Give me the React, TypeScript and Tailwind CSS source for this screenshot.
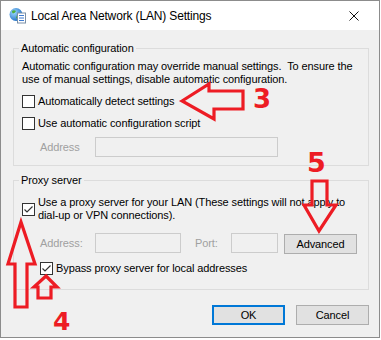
import React from "react";

const F = { fontFamily: '"Liberation Sans", Arial, sans-serif' };

function Check({ checked }: { checked?: boolean }) {
  return (
    <div className="w-[13px] h-[13px] border border-[#333333] bg-white shrink-0 flex items-center justify-center">
      {checked && (
        <svg width="11" height="11" viewBox="0 0 11 11">
          <path d="M1.5 5.5 L4 8 L9.5 2.5" fill="none" stroke="#333" strokeWidth="1.2" />
        </svg>
      )}
    </div>
  );
}

function GlobeIcon() {
  return (
    <svg width="17" height="17" viewBox="0 0 17 17">
      <defs>
        <radialGradient id="g" cx="0.35" cy="0.35" r="0.7">
          <stop offset="0" stopColor="#9fd8ff" />
          <stop offset="1" stopColor="#1f6fc4" />
        </radialGradient>
      </defs>
      <circle cx="7" cy="7.5" r="6.5" fill="url(#g)" />
      <path d="M3 4 Q5 2.5 7 4 Q6 6 4 6.5 Q3 6 3 4 Z" fill="#4caf3c" />
      <path d="M8 8 Q10 7 11 9 Q9 12 7 11 Z" fill="#4caf3c" />
      <rect x="8.5" y="6" width="8" height="10" fill="#ffffff" stroke="#7a8fa6" strokeWidth="1" />
      <line x1="10" y1="8.5" x2="15" y2="8.5" stroke="#3d7bd1" strokeWidth="1" />
      <line x1="10" y1="11" x2="15" y2="11" stroke="#3d7bd1" strokeWidth="1" />
      <line x1="10" y1="13.5" x2="15" y2="13.5" stroke="#3d7bd1" strokeWidth="1" />
    </svg>
  );
}

export default function App() {
  return (
    <div className="relative w-[381px] h-[340px] bg-white text-black" style={F}>
      <div className="w-[380px] h-[338px] border border-[#8c8c8c] flex flex-col bg-[#f0f0f0]">
        <div className="h-[29px] bg-white flex items-center shrink-0">
          <div className="ml-[8px]">
            <GlobeIcon />
          </div>
          <div className="ml-[5px] text-[12px] leading-[16px] tracking-[-0.15px] pt-[1px]">
            Local Area Network (LAN) Settings
          </div>
          <div className="ml-auto mr-[20px]">
            <svg width="10" height="10" viewBox="0 0 10 10">
              <path d="M0.5 0.5 L9.5 9.5 M9.5 0.5 L0.5 9.5" stroke="#111" strokeWidth="1" />
            </svg>
          </div>
        </div>
        <div className="flex-1 pl-[12px] pr-[10px] text-[11px] tracking-[-0.1px]">
          <fieldset className="mt-[10px] border border-[#dcdcdc] pl-[8px] pr-[8px] pb-[8px]">
            <legend className="ml-[-3px] px-[2px] leading-[16px]">Automatic configuration</legend>
            <div className="mt-[4px] leading-[13px] whitespace-nowrap">
              <div>Automatic configuration may override manual settings.&nbsp; To ensure the</div>
              <div>use of manual settings, disable automatic configuration.</div>
            </div>
            <div className="mt-[9px] flex items-center h-[13px]">
              <Check />
              <span className="ml-[3px] whitespace-nowrap">Automatically detect settings</span>
            </div>
            <div className="mt-[9px] flex items-center h-[13px]">
              <Check />
              <span className="ml-[3px] whitespace-nowrap">Use automatic configuration script</span>
            </div>
            <div className="mt-[7px] flex items-center pl-[18px]">
              <span className="w-[55px] text-[#a0a0a0]">Address</span>
              <div className="w-[183px] h-[20px] border border-[#cccccc] bg-[#f0f0f0]" />
            </div>
          </fieldset>
          <fieldset className="mt-[6px] border border-[#dcdcdc] pl-[8px] pr-[8px] pb-[14px]">
            <legend className="ml-[-3px] px-[2px] leading-[16px]">Proxy server</legend>
            <div className="mt-[8px] flex items-center">
              <Check checked />
              <div className="ml-[3px] leading-[13px] whitespace-nowrap">
                <div>Use a proxy server for your LAN (These settings will not apply to</div>
                <div>dial-up or VPN connections).</div>
              </div>
            </div>
            <div className="mt-[10px] flex items-center pl-[18px]">
              <span className="w-[55px] text-[#a0a0a0]">Address:</span>
              <div className="w-[86px] h-[20px] border border-[#cccccc] bg-[#f0f0f0]" />
              <span className="ml-[14px] w-[36px] text-[#a0a0a0]">Port:</span>
              <div className="w-[47px] h-[20px] border border-[#cccccc] bg-[#f0f0f0]" />
              <div className="ml-[6px] mt-[2px] w-[73px] h-[20px] border border-[#adadad] bg-[#e1e1e1] flex items-center justify-center">
                Advanced
              </div>
            </div>
            <div className="mt-[8px] flex items-center h-[13px] pl-[18px]">
              <Check checked />
              <span className="ml-[3px] whitespace-nowrap">Bypass proxy server for local addresses</span>
            </div>
          </fieldset>
          <div className="mt-[15px] flex justify-end gap-[11px]">
            <div className="w-[73px] h-[20px] border-2 border-[#0078d7] bg-[#e1e1e1] flex items-center justify-center">
              OK
            </div>
            <div className="w-[73px] h-[20px] border border-[#adadad] bg-[#e1e1e1] flex items-center justify-center">
              Cancel
            </div>
          </div>
        </div>
      </div>

      <svg
        className="absolute left-0 top-0 pointer-events-none"
        width="381"
        height="340"
        viewBox="0 0 381 340"
      >
        <g fill="none" stroke="#ed1c24" strokeWidth="3.2" strokeLinejoin="miter">
          <polygon points="182,101 209,84 209,91 243,91 243,109 214,109 214,119" />
          <polygon points="312,181 327,181 327,205 336,205 319,231 304,205 312,205" />
          <polygon points="21,222 35,264 27,264 27,307 15,307 15,264 8,264" />
          <polygon points="46,276 57,287 51,287 51,298 38,298 38,287 34,287" />
        </g>
      </svg>
      <span
        className="absolute left-[253px] top-[84px] text-[26px] leading-[30px] font-bold text-[#ed1c24]"
        style={{ fontFamily: '"DejaVu Sans", sans-serif' }}
      >
        3
      </span>
      <span
        className="absolute left-[307px] top-[148px] text-[27px] leading-[30px] font-bold text-[#ed1c24]"
        style={{ fontFamily: '"DejaVu Sans", sans-serif' }}
      >
        5
      </span>
      <span
        className="absolute left-[53px] top-[307px] text-[25px] leading-[30px] font-bold text-[#ed1c24]"
        style={{ fontFamily: '"DejaVu Sans", sans-serif' }}
      >
        4
      </span>
    </div>
  );
}
